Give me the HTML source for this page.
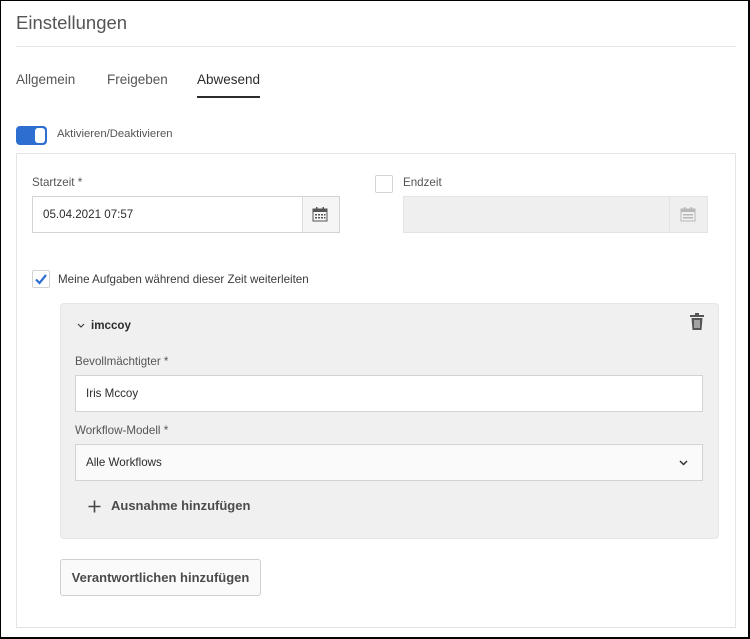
<!DOCTYPE html>
<html><head><meta charset="utf-8"><style>
*{box-sizing:border-box;margin:0;padding:0}
body{width:750px;height:639px;overflow:hidden;background:#fff;font-family:"Liberation Sans",sans-serif;color:#4b4b4b;position:relative}
.frame{position:absolute;left:0;top:0;width:750px;height:639px;border:1px solid #000;border-right-width:2px;border-bottom-width:2px}
.a{position:absolute}
.t{font-size:11.6px;color:#555}
.inp{position:absolute;border:1px solid #d3d3d3;background:#fff;font-size:11.6px;color:#2c2c2c;padding-left:10px;display:flex;align-items:center}
</style></head><body>
<div class="frame"></div>
<div class="a" style="left:16px;top:12px;font-size:18.5px;color:#555">Einstellungen</div>
<div class="a" style="left:16px;top:46px;width:720px;height:1px;background:#e6e6e6"></div>
<div class="a" style="left:16px;top:72px;font-size:13.5px;color:#555">Allgemein</div>
<div class="a" style="left:107px;top:72px;font-size:13.5px;color:#555">Freigeben</div>
<div class="a" style="left:197px;top:72px;font-size:13.5px;color:#2c2c2c">Abwesend</div>
<div class="a" style="left:197px;top:96px;width:63px;height:2px;background:#2c2c2c"></div>
<div class="a" style="left:16px;top:126px;width:31px;height:19px;border-radius:4px;background:#2d6fd1"></div>
<div class="a" style="left:35px;top:128px;width:10px;height:15px;border-radius:3px;background:#fff"></div>
<div class="a t" style="left:57px;top:128px;font-size:11.3px">Aktivieren/Deaktivieren</div>
<div class="a" style="left:16px;top:153px;width:720px;height:475px;border:1px solid #e3e3e3"></div>
<div class="a t" style="left:32px;top:176px">Startzeit *</div>
<div class="inp" style="left:32px;top:196px;width:308px;height:37px">05.04.2021 07:57</div>
<div class="a" style="left:302px;top:197px;width:37px;height:35px;background:#f5f5f5;border-left:1px solid #ddd"></div>
<svg class="a" style="left:312px;top:207px" width="16" height="15" viewBox="0 0 16 15"><rect x="1" y="2" width="14" height="12" fill="none" stroke="#555"/><rect x="1" y="2" width="14" height="3" fill="#555"/><g fill="#555"><rect x="3" y="7" width="2" height="1.5"/><rect x="6" y="7" width="2" height="1.5"/><rect x="9" y="7" width="2" height="1.5"/><rect x="12" y="7" width="1.5" height="1.5"/><rect x="3" y="10" width="2" height="1.5"/><rect x="6" y="10" width="2" height="1.5"/><rect x="9" y="10" width="2" height="1.5"/><rect x="12" y="10" width="1.5" height="1.5"/></g><rect x="4" y="0" width="1.5" height="3" fill="#555"/><rect x="10.5" y="0" width="1.5" height="3" fill="#555"/></svg>
<div class="a" style="left:375px;top:175px;width:18px;height:18px;border:1px solid #d3d3d3;border-radius:2px;background:#fff"></div>
<div class="a t" style="left:403px;top:176px">Endzeit</div>
<div class="a" style="left:403px;top:196px;width:305px;height:37px;border:1px solid #e3e3e3;background:#efefef"></div>
<div class="a" style="left:669px;top:197px;width:38px;height:35px;border-left:1px solid #e3e3e3"></div>
<svg class="a" style="left:680px;top:207px" width="16" height="15" viewBox="0 0 16 15" opacity=".35"><rect x="1" y="2" width="14" height="12" fill="none" stroke="#555"/><rect x="1" y="2" width="14" height="3" fill="#555"/><rect x="4" y="0" width="1.5" height="3" fill="#555"/><rect x="10.5" y="0" width="1.5" height="3" fill="#555"/><g fill="#555"><rect x="3" y="7" width="10" height="1.5"/><rect x="3" y="10" width="10" height="1.5"/></g></svg>
<div class="a" style="left:32px;top:270px;width:18px;height:18px;border:1px solid #d3d3d3;border-radius:2px;background:#fff"></div>
<svg class="a" style="left:34px;top:272px" width="14" height="14" viewBox="0 0 14 14"><path d="M2 7.5 L5.5 11 L12 3" fill="none" stroke="#2d6fd1" stroke-width="2.2"/></svg>
<div class="a t" style="left:58px;top:273px;color:#3a3a3a">Meine Aufgaben während dieser Zeit weiterleiten</div>
<div class="a" style="left:60px;top:303px;width:659px;height:236px;background:#f0f0f0;border:1px solid #e6e6e6;border-radius:4px"></div>
<svg class="a" style="left:77px;top:323px" width="8" height="6" viewBox="0 0 8 6"><path d="M1 1 L4 4 L7 1" fill="none" stroke="#444" stroke-width="1.2"/></svg>
<div class="a" style="left:91px;top:319px;font-size:11.6px;font-weight:bold;color:#2c2c2c">imccoy</div>
<svg class="a" style="left:689px;top:313px" width="16" height="17" viewBox="0 0 16 17"><rect x="1" y="2" width="14" height="2" fill="#555"/><rect x="6" y="0" width="4" height="2" fill="#555"/><path d="M2.5 5 H13.5 L12.5 17 H3.5 Z" fill="#555"/><g stroke="#f0f0f0" stroke-width="1"><line x1="6" y1="7" x2="6" y2="15"/><line x1="8" y1="7" x2="8" y2="15"/><line x1="10" y1="7" x2="10" y2="15"/></g></svg>
<div class="a t" style="left:75px;top:355px">Bevollmächtigter *</div>
<div class="inp" style="left:75px;top:375px;width:628px;height:37px">Iris Mccoy</div>
<div class="a t" style="left:75px;top:424px">Workflow-Modell *</div>
<div class="inp" style="left:75px;top:444px;width:628px;height:37px;background:#fafafa">Alle Workflows</div>
<svg class="a" style="left:679px;top:460px" width="9" height="6" viewBox="0 0 9 6"><path d="M1 1 L4.5 4.5 L8 1" fill="none" stroke="#333" stroke-width="1.5"/></svg>
<svg class="a" style="left:88px;top:500px" width="13" height="13" viewBox="0 0 13 13"><path d="M6.5 0.5 V12.5 M0.5 6.5 H12.5" stroke="#444" stroke-width="1.6"/></svg>
<div class="a" style="left:111px;top:498px;font-size:13px;font-weight:bold;color:#4b4b4b">Ausnahme hinzufügen</div>
<div class="a" style="left:60px;top:559px;width:201px;height:37px;border:1px solid #d0d0d0;border-radius:3px;background:#fafafa;font-size:13px;font-weight:bold;color:#4b4b4b;display:flex;align-items:center;justify-content:center">Verantwortlichen hinzufügen</div>
</body></html>
